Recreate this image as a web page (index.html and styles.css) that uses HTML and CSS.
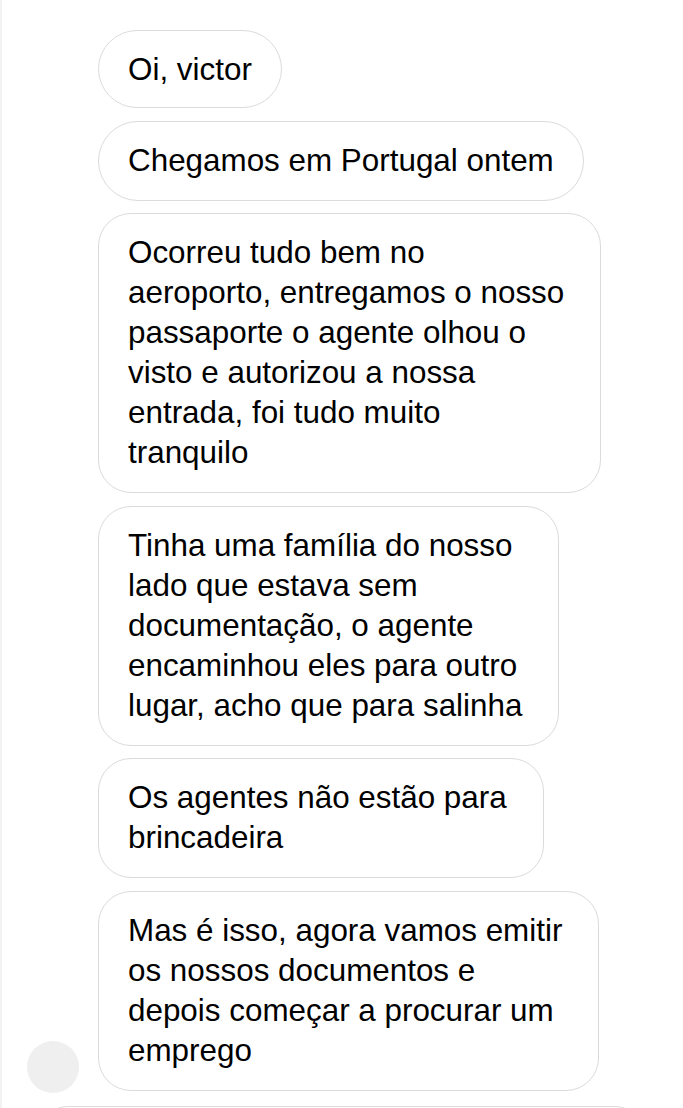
FILE: index.html
```html
<!DOCTYPE html>
<html lang="pt">
<head>
<meta charset="utf-8">
<title>Conversa</title>
<link rel="stylesheet" href="styles.css">
</head>
<body>
<div class="page">
  <div class="thread">
    <div class="avatar-col"><div class="avatar"></div></div>
    <div class="messages">
      <div class="bubble first">Oi, victor</div>
      <div class="bubble">Chegamos em Portugal ontem</div>
      <div class="bubble multi">Ocorreu tudo bem no<br>aeroporto, entregamos o nosso<br>passaporte o agente olhou o<br>visto e autorizou a nossa<br>entrada, foi tudo muito<br>tranquilo</div>
      <div class="bubble multi">Tinha uma família do nosso<br>lado que estava sem<br>documentação, o agente<br>encaminhou eles para outro<br>lugar, acho que para salinha</div>
      <div class="bubble multi">Os agentes não estão para<br>brincadeira</div>
      <div class="bubble multi">Mas é isso, agora vamos emitir<br>os nossos documentos e<br>depois começar a procurar um<br>emprego</div>
    </div>
  </div>
  <div class="composer"></div>
</div>
</body>
</html>
```

FILE: styles.css
```css
html, body {
  margin: 0;
  padding: 0;
  background: #ffffff;
}

body {
  font-family: "Liberation Sans", Arial, sans-serif;
  color: #000000;
}

.page {
  height: 1108px;
  overflow: hidden;
  border-left: 2px solid #f2f2f2;
  box-sizing: border-box;
}

.thread {
  display: grid;
  grid-template-columns: 52px 1fr;
  column-gap: 19px;
  padding: 30px 0 0 25px;
}

.avatar-col {
  display: flex;
  align-items: flex-end;
}

.avatar {
  width: 52px;
  height: 52px;
  border-radius: 50%;
  background: #efefef;
  margin-bottom: -2px;
}

.messages {
  display: flex;
  flex-direction: column;
  align-items: flex-start;
  gap: 12.6px;
}

.bubble {
  font-size: 31.4px;
  line-height: 40px;
  white-space: nowrap;
  padding: 19px 29px;
  border: 1px solid #dbdbdb;
  border-radius: 40px;
}

.bubble.first {
  padding-top: 19px;
  padding-bottom: 17px;
}

.bubble.multi {
  padding-right: 36px;
  border-radius: 33px;
}

.composer {
  margin: 15px 38px 0 36px;
  height: 60px;
  border: 1px solid #dbdbdb;
  border-radius: 30px;
}
```
